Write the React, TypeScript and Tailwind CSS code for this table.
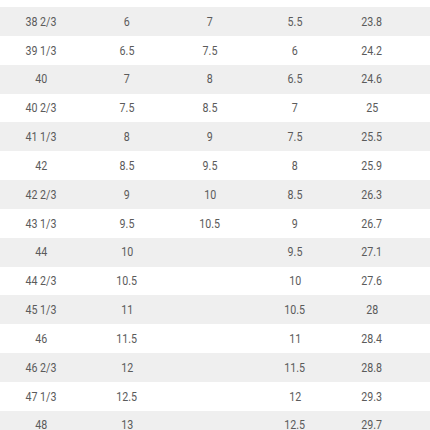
import React from 'react';

type Row = [string, string, string, string, string];

const rows: Row[] = [
  ['38 2/3', '6', '7', '5.5', '23.8'],
  ['39 1/3', '6.5', '7.5', '6', '24.2'],
  ['40', '7', '8', '6.5', '24.6'],
  ['40 2/3', '7.5', '8.5', '7', '25'],
  ['41 1/3', '8', '9', '7.5', '25.5'],
  ['42', '8.5', '9.5', '8', '25.9'],
  ['42 2/3', '9', '10', '8.5', '26.3'],
  ['43 1/3', '9.5', '10.5', '9', '26.7'],
  ['44', '10', '', '9.5', '27.1'],
  ['44 2/3', '10.5', '', '10', '27.6'],
  ['45 1/3', '11', '', '10.5', '28'],
  ['46', '11.5', '', '11', '28.4'],
  ['46 2/3', '12', '', '11.5', '28.8'],
  ['47 1/3', '12.5', '', '12', '29.3'],
  ['48', '13', '', '12.5', '29.7'],
];

const App: React.FC = () => {
  return (
    <div className="w-[430px] h-[430px] overflow-hidden bg-white pt-[7px] font-['Roboto','Liberation_Sans',sans-serif] text-[13px] text-[#5b5b5b]">
      {rows.map((row, i) => (
        <div
          key={row[0]}
          className={`grid grid-cols-[82px_90px_76px_94px_60px] items-center h-[28.85px] ${i % 2 === 0 ? 'bg-[#efefef]' : 'bg-white'}`}
        >
          {row.map((cell, j) => (
            <div key={j} className="text-center">
              <span className="inline-block scale-x-[0.82]">{cell}</span>
            </div>
          ))}
        </div>
      ))}
    </div>
  );
};

export default App;
